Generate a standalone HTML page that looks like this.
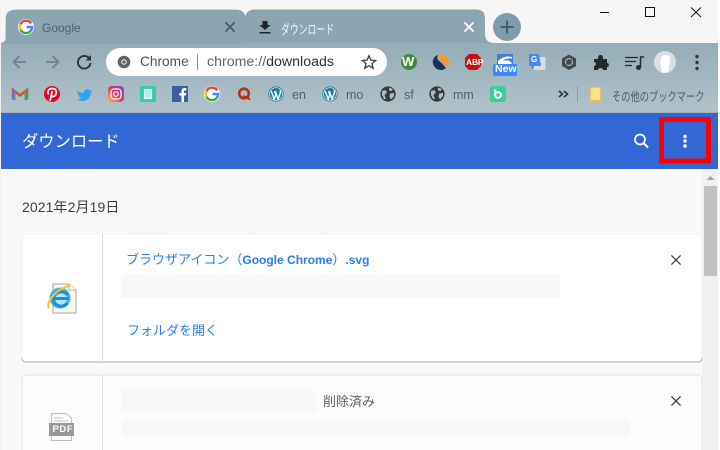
<!DOCTYPE html>
<html lang="ja"><head><meta charset="utf-8"><title>ダウンロード</title>
<style>
html,body{margin:0;padding:0;width:720px;height:450px;overflow:hidden;background:#f6f6f6}
body{position:relative;font-family:"Liberation Sans","Noto Sans CJK JP",sans-serif}
.a{position:absolute;white-space:nowrap}
svg{position:absolute;left:0;top:0}
</style></head><body>
<svg width="720" height="450" viewBox="0 0 720 450" style="z-index:1">
<defs>
<linearGradient id="fr" x1="0" y1="10" x2="0" y2="113" gradientUnits="userSpaceOnUse"><stop offset="0" stop-color="#87a2af"/><stop offset="1" stop-color="#b1c3ca"/></linearGradient>
<linearGradient id="ig" x1="0" y1="1" x2="1" y2="0"><stop offset="0" stop-color="#fdc04a"/><stop offset=".5" stop-color="#e1306c"/><stop offset="1" stop-color="#7b4bc4"/></linearGradient>
<g id="gg"><circle cx="0" cy="0" r="8" fill="#fff"/><path d="M5.2-3.6A6.2 6.2 0 0 0-5.5-2.8" fill="none" stroke="#ea4335" stroke-width="2.4"/><path d="M-5.5-2.8A6.2 6.2 0 0 0-5.5 2.8" fill="none" stroke="#fbbc05" stroke-width="2.4"/><path d="M-5.5 2.8A6.2 6.2 0 0 0 4.8 3.8" fill="none" stroke="#34a853" stroke-width="2.4"/><path d="M4.8 3.8A6.2 6.2 0 0 0 6.2 0H.6" fill="none" stroke="#4285f4" stroke-width="2.4"/></g>
<g id="wp"><circle r="7.6" fill="#21759b"/><circle r="6.4" fill="none" stroke="#d5e5ee" stroke-width=".8"/><path d="M-4.8-3-1.8 5.2-.2 1-1.4-3M-.6-3 2 5.2 4.4-1.2Q4.8-3 3.6-3.4" fill="none" stroke="#e8f2f7" stroke-width="1.5"/></g>
<g id="gl"><circle r="7.6" fill="#333a3e"/><path d="M-6-3-2.5-4-1-1.5-3.5 1-2 5-4 5-6 1ZM1-6.5 5-5 3.5-3 1-3.5ZM2-.5 6-1 6 2 3 5.5 1.5 3Z" fill="#a9bcc4"/></g>
<path id="x" d="M-4.6-4.6 4.6 4.6M4.6-4.6-4.6 4.6" fill="none"/>
</defs>
<!-- frame -->
<rect x="1" y="43" width="719" height="70" fill="url(#fr)"/>
<rect x="0" y="0" width="1" height="450" fill="#f2f2f2"/>
<rect x="1" y="112" width="719" height="1" fill="#a9b4b8"/>
<!-- tabs -->
<path d="M1 43Q6 43 6 37V19Q6 10 16 10H236Q245 10 245 19V33Q245 43 235 43Z" fill="#8ba5b1" stroke="#8c9fa9" stroke-width=".7"/>
<path d="M245 19Q245 10 255 10H475Q485 10 485 19V34Q485 43 495 43H236Q245 43 245 34Z" fill="#8ba5b2"/>
<path d="M247 14Q249 10 255 10H475Q483 10 484 15" fill="none" stroke="#999" stroke-width="1"/>
<use href="#gg" transform="translate(26 27)"/>
<use href="#x" transform="translate(230 27)" stroke="#3e5a76" stroke-width="1.7"/>
<path d="M262 22h5v4h3l-5.500 5-5.500-5h3ZM259 33h11v1.500h-11Z" fill="#222" transform="translate(.5 -1)"/>
<use href="#x" transform="translate(469 27)" stroke="#fff" stroke-width="1.7"/>
<circle cx="507" cy="27" r="14" fill="#7f9cab"/>
<path d="M507 20.500V33.500M500.500 27H513.500" stroke="#375676" stroke-width="1.800"/>
<!-- caption -->
<path d="M600 12.500H609" stroke="#111" stroke-width="1"/>
<rect x="645.500" y="7.500" width="9" height="9" fill="none" stroke="#111"/>
<path d="M691 7.500 701 17M701 7.500 691 17" stroke="#111" fill="none"/>
<!-- nav -->
<path d="M26 62H14M19.500 56 13.500 62 19.500 68" fill="none" stroke="#6f7f88" stroke-width="1.800"/>
<path d="M46 62H58M52.500 56 58.500 62 52.500 68" fill="none" stroke="#6f7f88" stroke-width="1.800"/>
<path d="M89.300 58.500A6.300 6.300 0 1 0 90.500 63" fill="none" stroke="#2b3236" stroke-width="1.900"/><path d="M85.500 60.500H91V55Z" fill="#2b3236"/>
<rect x="106" y="48" width="281" height="28" rx="14" fill="#fff"/>
<circle cx="124" cy="62" r="6.300" fill="#5f6368"/><circle cx="124" cy="62" r="2.700" fill="#fff"/><circle cx="124" cy="62" r="1.800" fill="#5f6368"/>
<rect x="197" y="54" width="1" height="16" fill="#8a8f94"/>
<path d="M369 55.700l1.900 4.400 4.700.4-3.600 3.100 1.100 4.600-4.100-2.500-4.100 2.500 1.100-4.600-3.600-3.100 4.700-.4Z" fill="none" stroke="#3a3d40" stroke-width="1.300"/>
<!-- extensions -->
<circle cx="409" cy="62" r="8" fill="#3f8a3a"/>
<path d="M438 55C434 56 432.500 60 432.800 62.500 433.300 67 437 70 441 70 443.500 70 445 69 445.800 68 443 64 440.500 62 438.500 60.500 437 59 437 57 438 55Z" fill="#1e2f59"/>
<path d="M440 54C446 54 449 58.500 449 62.500 449 64.500 448 66 447 67 445.500 66 443.500 62.500 441.500 61 439.500 59.500 438.500 57 440 54Z" fill="#f59a1e"/>
<path d="M469 54H477L481 58V66L477 70H469L465 66V58Z" fill="#c50f0f"/>
<rect x="497" y="54" width="16" height="11" fill="#3f81cf"/><path d="M498 61Q504 55 512 57V58.500Q506 58 503 60.500H508Q511 61 512 64H498Z" fill="#fff"/>
<rect x="493" y="64" width="24" height="12" rx="1.500" fill="#3f87f5"/>
<path d="M534 57H545.500V70H534Z" fill="#d9dcdc"/><path d="M529 54H539L541 66H534L532.500 69 531 66H529Z" fill="#4687f1"/>
<path d="M569 54.500 576 58.500V66L569 70 562 66V58.500Z" fill="#44474a"/><circle cx="569" cy="62" r="3.500" fill="none" stroke="#9fb2bb" stroke-width="1.300"/><path d="M566.500 64.500 571.500 59.500" stroke="#44474a" stroke-width="1.500"/>
<path d="M594 59H598C598 56 598.500 55 600.500 55S603 56 603 59H607V63C609.500 62.500 609.500 67.500 607 67V70H603C603 67.500 598 67.500 598 70H594V66C596.500 66 596.500 62 594 62Z" fill="#25292c"/>
<path d="M625 57.500H638M625 61.500H636M625 65.500H632" stroke="#25292c" stroke-width="1.300" fill="none"/><path d="M640 57H644M640.500 57V67" stroke="#25292c" stroke-width="1.500" fill="none"/><circle cx="638.500" cy="67.500" r="2.500" fill="#25292c"/>
<circle cx="665" cy="62" r="11" fill="#dcdfe0"/><path d="M661 72.800C663 69 660 66 660.500 61S663 55 666 55 670.500 57 670 61 668 66 668.500 72.500Z" fill="#fff"/>
<circle cx="697" cy="56.500" r="1.700" fill="#30363a"/><circle cx="697" cy="62.500" r="1.700" fill="#30363a"/><circle cx="697" cy="68.500" r="1.700" fill="#30363a"/>
<!-- bookmarks -->
<path d="M13 99V90L20 95.500 27 90V99" fill="none" stroke="#ea4335" stroke-width="2.400"/><path d="M14 90.500V100" stroke="#4285f4" stroke-width="2.800"/><path d="M26 90.500V100" stroke="#34a853" stroke-width="2.800"/>
<circle cx="52" cy="94" r="8" fill="#e60023"/><path d="M50 101 52.300 91M48.600 94.500C46.500 90 50 88.500 52.500 88.500 56 88.500 57 91.500 56 94 55 97 51.800 97.500 51 95.200" fill="none" stroke="#fff" stroke-width="1.700"/>
<path d="M77 90.500C79.500 92.500 82 93 84 93 83.500 89.500 87.500 88 89.500 90.500L92 89.800 90.500 91.800 92.300 91.500 90.800 93C90.500 98 86.500 101 83 101 80.500 101 78.500 100.500 77 99.500 79 99.500 80.500 99 81.500 98 79.500 97.800 78.500 96.500 78 95.500L79.500 95.500C78 94.500 77.300 93 77.300 92Z" fill="#2ea3f2"/>
<rect x="108" y="86" width="16" height="16" rx="4" fill="url(#ig)"/><rect x="111" y="89" width="10" height="10" rx="3" fill="none" stroke="#fff" stroke-width="1.200"/><circle cx="116" cy="94" r="2.300" fill="none" stroke="#fff" stroke-width="1.200"/>
<rect x="140" y="86" width="16" height="16" fill="#39c9b3"/><path d="M144.500 89.500H151.500V98.500H144.500Z" fill="#b8efe4" stroke="#e8fbf7" stroke-width="1.200"/>
<rect x="172" y="86" width="16" height="16" fill="#3b5ca8"/><path d="M181.500 102V95.500H179.300V93H181.500V91C181.500 89 182.800 88 184.500 88H186.300V90.500H185C184.200 90.500 184 90.900 184 91.500V93H186.200L185.900 95.500H184V102Z" fill="#fff"/>
<use href="#gg" transform="translate(212 94)"/>
<circle cx="244" cy="93.500" r="4.800" fill="none" stroke="#b23312" stroke-width="2.600"/><path d="M243 96.500Q247 96.500 250 99.500" fill="none" stroke="#b23312" stroke-width="2.200"/>
<use href="#wp" transform="translate(276 94)"/>
<use href="#wp" transform="translate(330 94)"/>
<use href="#gl" transform="translate(388 94)"/>
<use href="#gl" transform="translate(437 94)"/>
<rect x="490" y="86" width="16" height="16" rx="3" fill="#3ccf9a"/><circle cx="498" cy="95" r="2.900" fill="none" stroke="#fff" stroke-width="2"/><path d="M495.100 89.500V95" stroke="#fff" stroke-width="2"/>
<path d="M559 91 562.500 94 559 97M564 91 567.500 94 564 97" fill="none" stroke="#2b3033" stroke-width="1.600"/>
<rect x="577" y="86" width="1" height="16" fill="#8d9ea6"/>
<rect x="590.500" y="87.500" width="10" height="13" rx="1" fill="#fde293" stroke="#f6c445" stroke-width="1.200"/>
<!-- page -->
<rect x="1" y="113" width="719" height="56" fill="#3367d6"/>
<rect x="1" y="169" width="702" height="281" fill="#f8f9fa"/>
<rect x="702" y="169" width="18" height="281" fill="#f1f1f1"/>
<rect x="704" y="186" width="13" height="90" fill="#c1c1c1"/>
<path d="M710.500 176 714.500 180H706.500Z" fill="#a3a3a3"/>
<circle cx="640" cy="139.500" r="5" fill="none" stroke="#fff" stroke-width="1.700"/><path d="M643.500 143 648 147.500" stroke="#fff" stroke-width="2"/>
<circle cx="685" cy="136.500" r="1.700" fill="#fff"/><circle cx="685" cy="141" r="1.700" fill="#fff"/><circle cx="685" cy="146" r="1.700" fill="#fff"/>
<rect x="661.500" y="119.500" width="47" height="41.500" fill="none" stroke="#ff0000" stroke-width="5"/>
<!-- card 1 -->
<rect x="22" y="234" width="680" height="128" rx="4" fill="#fff" stroke="#e6e7e9" stroke-width=".6"/>
<path d="M22 358V358Q22 362 26 362H698Q702 362 702 358" fill="none" stroke="#b9bbbd" stroke-width="1.200"/>
<rect x="102" y="234" width="1" height="128" fill="#dadce0"/>
<rect x="121" y="275" width="439" height="23" fill="#f7f8f9"/>
<use href="#x" transform="translate(676 260)" stroke="#3c4043" stroke-width="1.300"/>
<path d="M53 284H69L76 290V313H53Z" fill="#f7f7f7" stroke="#a4a4a4"/><path d="M69 284V290H76" fill="#fff" stroke="#b0b0b0"/>
<circle cx="60" cy="298" r="10.500" fill="#49b3e8"/><circle cx="60" cy="298" r="7" fill="#b5e3f7"/>
<path d="M52 298.500H69M67.500 303C64 308 55 307 53.500 300 52.500 293 63 288.500 67.500 295" fill="none" stroke="#1d8fd6" stroke-width="3"/>
<path d="M49 308C45 303 56 289 70 285.500" fill="none" stroke="#fcc419" stroke-width="2"/>
<!-- card 2 -->
<rect x="22" y="375" width="680" height="90" rx="4" fill="#fcfcfc" stroke="#e3e4e6" stroke-width="1"/>
<rect x="102" y="375" width="1" height="75" fill="#dfe0e3"/>
<rect x="122" y="390" width="195" height="22" fill="#f7f8f9"/>
<rect x="122" y="419" width="508" height="18" fill="#f7f8f9"/>
<use href="#x" transform="translate(676 401)" stroke="#3c4043" stroke-width="1.300"/>
<path d="M51.500 413.500H66L71.500 418V440.500H51.500Z" fill="#fafafa" stroke="#bdbdbd"/>
<path d="M54 418H63M54 421H68" stroke="#c6c6c6"/>
<rect x="49" y="423" width="25" height="13" fill="#989898"/>
<rect x="718" y="0" width="2" height="450" fill="#fff"/>
</svg>
<div style="position:absolute;inset:0;z-index:2">
<div class="a" style="left:42px;top:21px;font-size:12px;color:#4a6278">Google</div>
<div class="a" style="left:281px;top:19px;font-size:13px;color:#f4f7f8;transform:scaleX(.68);transform-origin:0 0">ダウンロード</div>
<div class="a" style="left:140px;top:54px;font-size:13.700px;color:#4d5156">Chrome</div>
<div class="a" style="left:207px;top:54px;font-size:14.200px;color:#5f6368">chrome://<span style="color:#2f3235">downloads</span></div>
<div class="a" style="left:402px;top:54px;font-size:13px;font-weight:bold;color:#fff">W</div>
<div class="a" style="left:466px;top:57px;font-size:8.500px;font-weight:bold;color:#fff;letter-spacing:-.2px">ABP</div>
<div class="a" style="left:495px;top:63px;font-size:10.500px;font-weight:bold;color:#fff;line-height:13px">New</div>
<div class="a" style="left:531px;top:55px;font-size:8px;font-weight:bold;color:#fff">G</div>
<div class="a" style="left:292px;top:88px;font-size:12.500px;color:#50626e">en</div>
<div class="a" style="left:346px;top:88px;font-size:12.500px;color:#50626e">mo</div>
<div class="a" style="left:404px;top:88px;font-size:12.500px;color:#50626e">sf</div>
<div class="a" style="left:453px;top:88px;font-size:12.500px;color:#50626e">mm</div>
<div class="a" style="left:612px;top:86px;font-size:12.500px;color:#485c6a;transform:scaleX(.74);transform-origin:0 0">その他のブックマーク</div>
<div class="a" style="left:22px;top:128px;font-size:16.300px;color:#fff">ダウンロード</div>
<div class="a" style="left:22px;top:197px;font-size:14px;letter-spacing:.1px;color:#3c4043">2021年2月19日</div>
<div class="a" style="left:126px;top:249px;font-size:12px;font-weight:bold;color:#2b7de9"><span style="font-weight:normal;font-size:13px">ブラウザアイコン（</span>Google Chrome<span style="font-weight:normal;font-size:13px">）</span>.svg</div>
<div class="a" style="left:127px;top:320px;font-size:13px;color:#2b7de9">フォルダを開く</div>
<div class="a" style="left:323px;top:391px;font-size:13px;color:#5f6368">削除済み</div>
<div class="a" style="left:52.500px;top:424px;font-size:9.500px;font-weight:bold;letter-spacing:.6px;color:#fff;line-height:11px">PDF</div>
</div>
</body></html>
